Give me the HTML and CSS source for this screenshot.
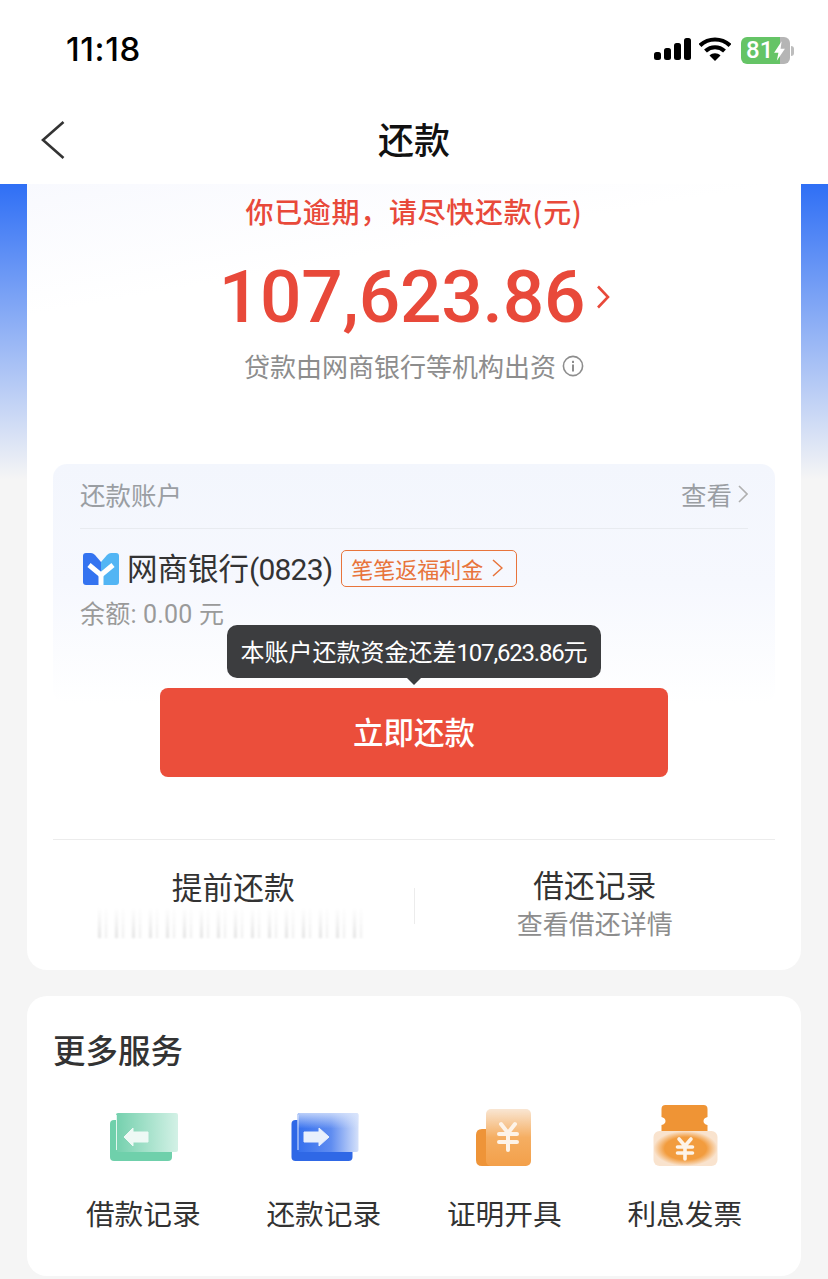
FILE: index.html
```html
<!DOCTYPE html>
<html lang="zh-CN">
<head>
<meta charset="utf-8">
<title>还款</title>
<link rel="stylesheet" href="styles.css">
</head>
<body>
<div class="phone">
  <header class="status">
    <span class="time">11:18</span>
    <div class="status-icons">
      <svg width="38" height="24" viewBox="0 0 38 24" class="signal"><rect x="0" y="15" width="7" height="8" rx="2.5"/><rect x="10" y="11" width="7" height="12" rx="2.5"/><rect x="20" y="6" width="7" height="17" rx="2.5"/><rect x="30" y="1" width="7" height="22" rx="2.5"/></svg>
      <svg width="32" height="24" viewBox="0 0 32 24" class="wifi"><path d="M1 8.500C9.500 0.500 22.500 0.500 31 8.500" fill="none" stroke="#000" stroke-width="4.200"/><path d="M6.500 14C12 9 20 9 25.500 14" fill="none" stroke="#000" stroke-width="4.200"/><path d="M10.500 18.500C13.500 15.500 18.500 15.500 21.500 18.500L16 24Z"/></svg>
      <div class="battery">
        <div class="battery-body"><span class="battery-num">81</span><svg class="bolt" width="13" height="24" viewBox="0 0 12 20"><path d="M8 1 1 11.500h4L3.500 19 11 8H7Z"/></svg></div>
        <span class="battery-cap"></span>
      </div>
    </div>
  </header>
  <nav class="navbar">
    <svg class="back" width="26" height="40" viewBox="0 0 26 40"><path d="M23.500 2 3 20l20.500 18" fill="none" stroke="#333" stroke-width="2.600"/></svg>
    <h1 class="nav-title">还款</h1>
  </nav>
  <main class="content">
    <section class="card card-main">
      <p class="overdue">你已逾期，请尽快还款(元)</p>
      <div class="amount-row">
        <span class="amount">107,623.86</span>
        <svg class="amount-arrow" width="14" height="26" viewBox="0 0 14 26"><path d="M2 2.500 12 13 2 23.500" fill="none" stroke="#e8493a" stroke-width="2.600"/></svg>
      </div>
      <p class="lender">贷款由网商银行等机构出资
        <svg class="info" width="22" height="22" viewBox="0 0 22 22"><circle cx="11" cy="11" r="9.600" fill="none" stroke="#8d8d8d" stroke-width="1.600"/><rect x="10" y="9.500" width="2" height="7" fill="#8d8d8d"/><rect x="10" y="5.800" width="2" height="2.200" fill="#8d8d8d"/></svg>
      </p>
      <div class="account">
        <div class="account-head">
          <span>还款账户</span>
          <span class="view">查看<svg width="10" height="18" viewBox="0 0 10 18"><path d="M1 1l8 8-8 8" fill="none" stroke="#b0b0b0" stroke-width="1.600"/></svg></span>
        </div>
        <div class="bank-row">
          <svg class="bank-logo" width="36" height="32" viewBox="0 0 36 32"><path d="M3 0h5q2 0 4 2l6 7v23H3q-3 0-3-3V3q0-3 3-3Z" fill="#3473f0"/><path d="M33 0h-5q-2 0-4 2l-6 7v23h15q3 0 3-3V3q0-3-3-3Z" fill="#52b5f4"/><path d="M6 12l12 10 12-10" fill="none" stroke="#fff" stroke-width="5"/><path d="M18 21v11" stroke="#fff" stroke-width="5"/></svg>
          <span class="bank-name">网商银行<span class="bank-digits">(0823)</span></span>
          <span class="promo">笔笔返福利金<svg width="11" height="18" viewBox="0 0 11 18"><path d="M1 1l9 8-9 8" fill="none" stroke="#e8743b" stroke-width="1.500"/></svg></span>
        </div>
        <p class="balance">余额: 0.00 元</p>
      </div>
      <div class="pay-area">
        <div class="tooltip">本账户还款资金还差<span class="tip-num">107,623.86</span>元</div>
        <button class="pay-btn">立即还款</button>
      </div>
      <div class="shortcuts">
        <div class="shortcut">
          <span class="shortcut-title">提前还款</span>
          <span class="smudge"></span>
        </div>
        <span class="shortcut-sep"></span>
        <div class="shortcut">
          <span class="shortcut-title">借还记录</span>
          <span class="shortcut-sub">查看借还详情</span>
        </div>
      </div>
    </section>
    <section class="card card-more">
      <h2 class="more-title">更多服务</h2>
      <div class="services">
        <div class="service">
          <svg class="service-icon" width="72" height="66" viewBox="0 0 72 66">
            <defs>
              <linearGradient id="gf" x1="0" x2="1"><stop offset="0" stop-color="#74d0ad"/><stop offset="1" stop-color="#d3f1e6"/></linearGradient>
              <linearGradient id="bf" x1="0" x2="1"><stop offset="0" stop-color="#3570ee"/><stop offset="0.55" stop-color="#5f8cf0"/><stop offset="1" stop-color="#d5e1fa"/></linearGradient>
              <linearGradient id="bt" x1="0" y1="0" x2="0" y2="1"><stop offset="0" stop-color="#dbe6fc" stop-opacity="0.8"/><stop offset="0.4" stop-color="#dbe6fc" stop-opacity="0"/></linearGradient>
              <linearGradient id="of" x1="0" y1="0" x2="0" y2="1"><stop offset="0" stop-color="#f9e6d3"/><stop offset="0.5" stop-color="#f5ae62"/><stop offset="1" stop-color="#f3a04a"/></linearGradient>
              <radialGradient id="or"><stop offset="0.65" stop-color="#f29c3e"/><stop offset="1" stop-color="#f9e3ce"/></radialGradient>
            </defs>
            <rect x="3" y="16" width="62" height="41" rx="4" fill="#6fd0ab"/>
            <rect x="9" y="9" width="62" height="39" rx="2" fill="url(#gf)"/>
            <path d="M9.500 11v35" stroke="#e3f6ef" stroke-width="1"/>
            <path d="M17 33l9-9v4h15v10H26v4Z" fill="#eef9f5" stroke="#eef9f5" stroke-width="1" stroke-linejoin="round"/>
          </svg>
          <span>借款记录</span>
        </div>
        <div class="service">
          <svg class="service-icon" width="72" height="66" viewBox="0 0 72 66">
            <rect x="3.500" y="16" width="61" height="41" rx="4" fill="#2f68e6"/>
            <rect x="9.500" y="9" width="61" height="39" rx="2" fill="url(#bf)"/>
            <rect x="9.500" y="9" width="61" height="39" rx="2" fill="url(#bt)"/>
            <path d="M10 11v35" stroke="#dfe8fb" stroke-width="1"/>
            <path d="M16 28h15v-4l10 9-10 9v-4H16Z" fill="#e9f0fc" stroke="#e9f0fc" stroke-width="1" stroke-linejoin="round"/>
          </svg>
          <span>还款记录</span>
        </div>
        <div class="service">
          <svg class="service-icon" width="72" height="66" viewBox="0 0 72 66">
            <path d="M14 25h16v37H14q-6 0-6-6V31q0-6 6-6Z" fill="#ee9438"/>
            <rect x="18" y="5" width="45" height="57" rx="5" fill="url(#of)"/>
            <path d="M33 20l7 9 7-9M31 30h18M31 38h18M40 29v17" fill="none" stroke="#fdf3e8" stroke-width="4" stroke-linecap="round"/>
          </svg>
          <span>证明开具</span>
        </div>
        <div class="service">
          <svg class="service-icon" width="72" height="66" viewBox="0 0 72 66">
            <path d="M16.500 1h38q4 0 4 4v8q-4 1-4 4t4 4v6h-46v-6q4-1 4-4t-4-4V5q0-4 4-4Z" fill="#ef9435"/>
            <rect x="4.500" y="27" width="64" height="35" rx="6" fill="url(#or)"/>
            <path d="M30 35l6 7 6-7M28.500 43h15M28.500 49h15M36 42v13" fill="none" stroke="#fdf3e8" stroke-width="3.600" stroke-linecap="round"/>
          </svg>
          <span>利息发票</span>
        </div>
      </div>
    </section>
  </main>
</div>
</body>
</html>
```
FILE: styles.css
```css
* { box-sizing: border-box; }
html, body { margin: 0; padding: 0; }
body {
  width: 828px;
  height: 1279px;
  overflow: hidden;
  background: #f5f5f5;
  font-family: Roboto, "Noto Sans CJK SC", sans-serif;
}
p, h1, h2 { margin: 0; font-weight: 400; }
.phone { width: 828px; height: 1279px; overflow: hidden; }

.status {
  height: 100px;
  background: #fff;
  display: flex;
  justify-content: space-between;
  padding: 27px 34px 0 66px;
}
.time { font-size: 33px; font-weight: 500; line-height: 44px; color: #000; font-family: Inter, Roboto, sans-serif; letter-spacing: 0.6px; }
.status-icons { display: flex; align-items: flex-start; gap: 7px; padding-top: 10px; }
.battery { display: flex; align-items: center; margin-left: 3px; height: 27px; }
.battery-body {
  width: 49px;
  height: 27px;
  border-radius: 6px;
  background: linear-gradient(90deg, #65c466 0 39px, #b5b5b5 39px);
  display: flex;
  align-items: center;
  padding-left: 5px;
}
.battery-num { font-size: 24px; font-weight: 500; color: #fff; line-height: 27px; }
.bolt { fill: #fff; }
.battery-cap { width: 3px; height: 10px; background: #bdbdbd; border-radius: 0 3px 3px 0; margin-left: 1px; }

.navbar {
  position: relative;
  height: 84px;
  background: #fff;
  display: flex;
  align-items: center;
  justify-content: center;
}
.back { position: absolute; left: 40px; top: 20px; }
.nav-title { font-size: 36px; font-weight: 500; color: #111; line-height: 84px; margin-top: -8px; font-family: "Noto Sans CJK SC", sans-serif; }

.content {
  height: 1095px;
  padding: 0 27px;
  background: linear-gradient(180deg, #2f6ff5 0, #f5f5f5 295px);
  background-repeat: no-repeat;
  display: flex;
  flex-direction: column;
  gap: 26px;
}
.card { background: #fff; }
.card-main {
  height: 786px;
  border-radius: 0 0 20px 20px;
  padding: 0 26px;
  background: linear-gradient(170deg, #f8f9fe 0, #fff 130px);
  display: flex;
  flex-direction: column;
  align-items: stretch;
}
.overdue {
  margin-top: 6px;
  text-align: center;
  font-size: 28px;
  line-height: 42px;
  font-weight: 500;
  color: #e8493a;
  letter-spacing: 0.7px;
  font-family: "Noto Sans CJK SC", sans-serif;
}
.amount-row {
  margin-top: 27px;
  height: 76px;
  display: flex;
  align-items: center;
  justify-content: center;
  gap: 11px;
  padding-left: 1px;
}
.amount { font-size: 73px; font-weight: 500; color: #e8493a; line-height: 76px; letter-spacing: -0.2px; }
.lender {
  margin-top: 12px;
  display: flex;
  align-items: center;
  justify-content: center;
  gap: 6px;
  font-size: 26px;
  line-height: 38px;
  color: #8d8d8d;
  font-family: "Noto Sans CJK SC", sans-serif;
  height: 38px;
}
.account {
  margin-top: 79px;
  height: 240px;
  border-radius: 14px;
  background: linear-gradient(180deg, #f3f6fd 0, #f6f8fe 120px, #fff 240px);
  padding: 0 27px;
}
.account-head {
  height: 65px;
  border-bottom: 1px solid #e8ebf0;
  padding-bottom: 5px;
  display: flex;
  justify-content: space-between;
  align-items: center;
  font-size: 25.500px;
  color: #9a9ea3;
  font-family: "Noto Sans CJK SC", sans-serif;
}
.view { display: flex; align-items: center; gap: 6px; }
.bank-row { margin-top: 21px; display: flex; align-items: center; height: 38px; }
.bank-logo { margin-left: 3px; flex: none; }
.bank-name { margin-left: 8px; font-size: 30.500px; color: #333; line-height: 38px; white-space: nowrap; padding-top: 2px; }
.bank-digits { letter-spacing: -0.8px; font-size: 30px; }
.promo {
  margin-left: 9px;
  margin-bottom: 2px;
  height: 37px;
  width: 176px;
  border: 1px solid #e8743b;
  border-radius: 5px;
  display: flex;
  align-items: center;
  gap: 9px;
  padding-left: 9px;
  font-size: 22px;
  color: #e8743b;
  white-space: nowrap;
}
.balance { margin-top: 9px; font-size: 25px; line-height: 36px; color: #9a9a9a; letter-spacing: 0.2px; }
.pay-area {
  position: relative;
  display: flex;
  justify-content: center;
  margin-top: -16px;
  height: 89px;
}
.pay-btn {
  width: 508px;
  height: 89px;
  border: 0;
  border-radius: 8px;
  padding: 0 0 4px;
  background: #eb4e3b;
  color: #fff;
  font-size: 30.500px;
  font-weight: 500;
  font-family: "Noto Sans CJK SC", sans-serif;
}
.tooltip {
  position: absolute;
  left: 174px;
  top: -63px;
  width: 374px;
  height: 53px;
  background: #3c3d3f;
  border-radius: 10px;
  color: #fff;
  font-size: 24px;
  line-height: 57px;
  text-align: center;
  white-space: nowrap;
}
.tip-num { letter-spacing: -1.200px; }
.tooltip::after {
  content: "";
  position: absolute;
  left: 179px;
  top: 52px;
  border: 8px solid transparent;
  border-top-color: #3c3d3f;
  border-bottom: 0;
}
.shortcuts {
  margin-top: 62px;
  border-top: 1px solid #ececec;
  height: 130px;
  display: grid;
  grid-template-columns: 1fr 1px 1fr;
  align-items: center;
  padding-bottom: 8px;
}
.shortcut { display: flex; flex-direction: column; align-items: center; }
.shortcut-title { font-size: 30.700px; line-height: 44px; color: #333; font-family: "Noto Sans CJK SC", sans-serif; }
.shortcut-sub { font-size: 26px; line-height: 32px; color: #8d8d8d; font-family: "Noto Sans CJK SC", sans-serif; padding-top: 1px; }
.smudge {
  width: 270px;
  height: 30px;
  background:
    linear-gradient(180deg, #fff 0, rgba(255, 255, 255, 0) 100%),
    repeating-linear-gradient(90deg, #d0d0d0 0 3px, #fff 3px 7px, #e0e0e0 7px 9px, #fff 9px 17px);
  filter: blur(1.200px);
  opacity: 0.55;
}
.shortcut-sep { width: 1px; height: 36px; background: #ececec; margin-top: 10px; }

.card-more {
  height: 280px;
  border-radius: 20px;
  padding: 30px 26px 0;
}
.more-title { font-size: 32.500px; line-height: 46px; font-weight: 500; color: #333; font-family: "Noto Sans CJK SC", sans-serif; }
.services {
  margin-top: 32px;
  display: grid;
  grid-template-columns: repeat(4, 180.500px);
}
.service { display: flex; flex-direction: column; align-items: center; }
.service-icon { display: block; filter: blur(0.4px); }
.service span { margin-top: 23px; font-size: 28.700px; line-height: 40px; color: #333; font-family: "Noto Sans CJK SC", sans-serif; }
```
